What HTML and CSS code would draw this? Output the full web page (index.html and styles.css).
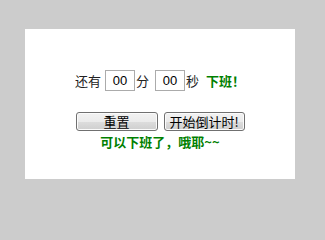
FILE: index.html
```html
<!DOCTYPE html>
<html lang="zh">
<head>
<meta charset="utf-8">
<title>倒计时</title>
<link rel="stylesheet" href="styles.css">
</head>
<body>
<div class="panel">
  <div class="row-time">
    <span class="label">还有</span>
    <input class="num" type="text" value="00">
    <span class="unit">分</span>
    <input class="num num-sec" type="text" value="00">
    <span class="unit">秒</span>
    <b class="off">下班！</b>
  </div>
  <div class="row-buttons">
    <button class="btn btn-reset" type="button">重置</button>
    <button class="btn btn-start" type="button">开始倒计时!</button>
  </div>
  <div class="message">可以下班了，哦耶~~</div>
</div>
</body>
</html>
```
FILE: styles.css
```css
html, body {
  margin: 0;
  padding: 0;
}
body {
  background: #cccccc;
  font-family: "Noto Sans CJK SC", "Liberation Sans", sans-serif;
  font-size: 13px;
  color: #222;
}
.panel {
  margin: 29px 0 0 25px;
  width: 270px;
  height: 150px;
  box-sizing: border-box;
  padding-top: 41px;
  background: #ffffff;
}
.row-time {
  display: flex;
  justify-content: center;
  align-items: center;
  height: 21px;
  line-height: 17px;
}
.label {
  margin-right: 4px;
}
.num {
  box-sizing: border-box;
  width: 30px;
  height: 21px;
  margin: 0 1px 0 0;
  padding: 0;
  border: 1px solid #ababab;
  font-family: "Liberation Sans", sans-serif;
  font-size: 13px;
  color: #000;
  text-align: center;
  background: #fff;
  outline: none;
}
.num-sec {
  margin-left: 6px;
}
.off {
  margin-left: 7px;
  color: #008000;
  font-weight: bold;
}
.row-buttons {
  display: flex;
  justify-content: center;
  gap: 6px;
  margin-top: 21px;
}
.btn {
  box-sizing: border-box;
  height: 19px;
  padding: 0;
  border: 1px solid #707070;
  border-radius: 3px;
  background: linear-gradient(#f2f2f2 0%, #ebebeb 50%, #dddddd 50%, #cfcfcf 100%);
  box-shadow: inset 0 0 0 1px #fbfbfb;
  font-family: "Noto Sans CJK SC", "Liberation Sans", sans-serif;
  font-size: 13px;
  line-height: 17px;
  color: #000;
}
.btn-reset {
  width: 82px;
}
.btn-start {
  width: 81px;
}
.message {
  margin-top: 2px;
  text-align: center;
  line-height: 17px;
  color: #008000;
  font-weight: bold;
}
```
